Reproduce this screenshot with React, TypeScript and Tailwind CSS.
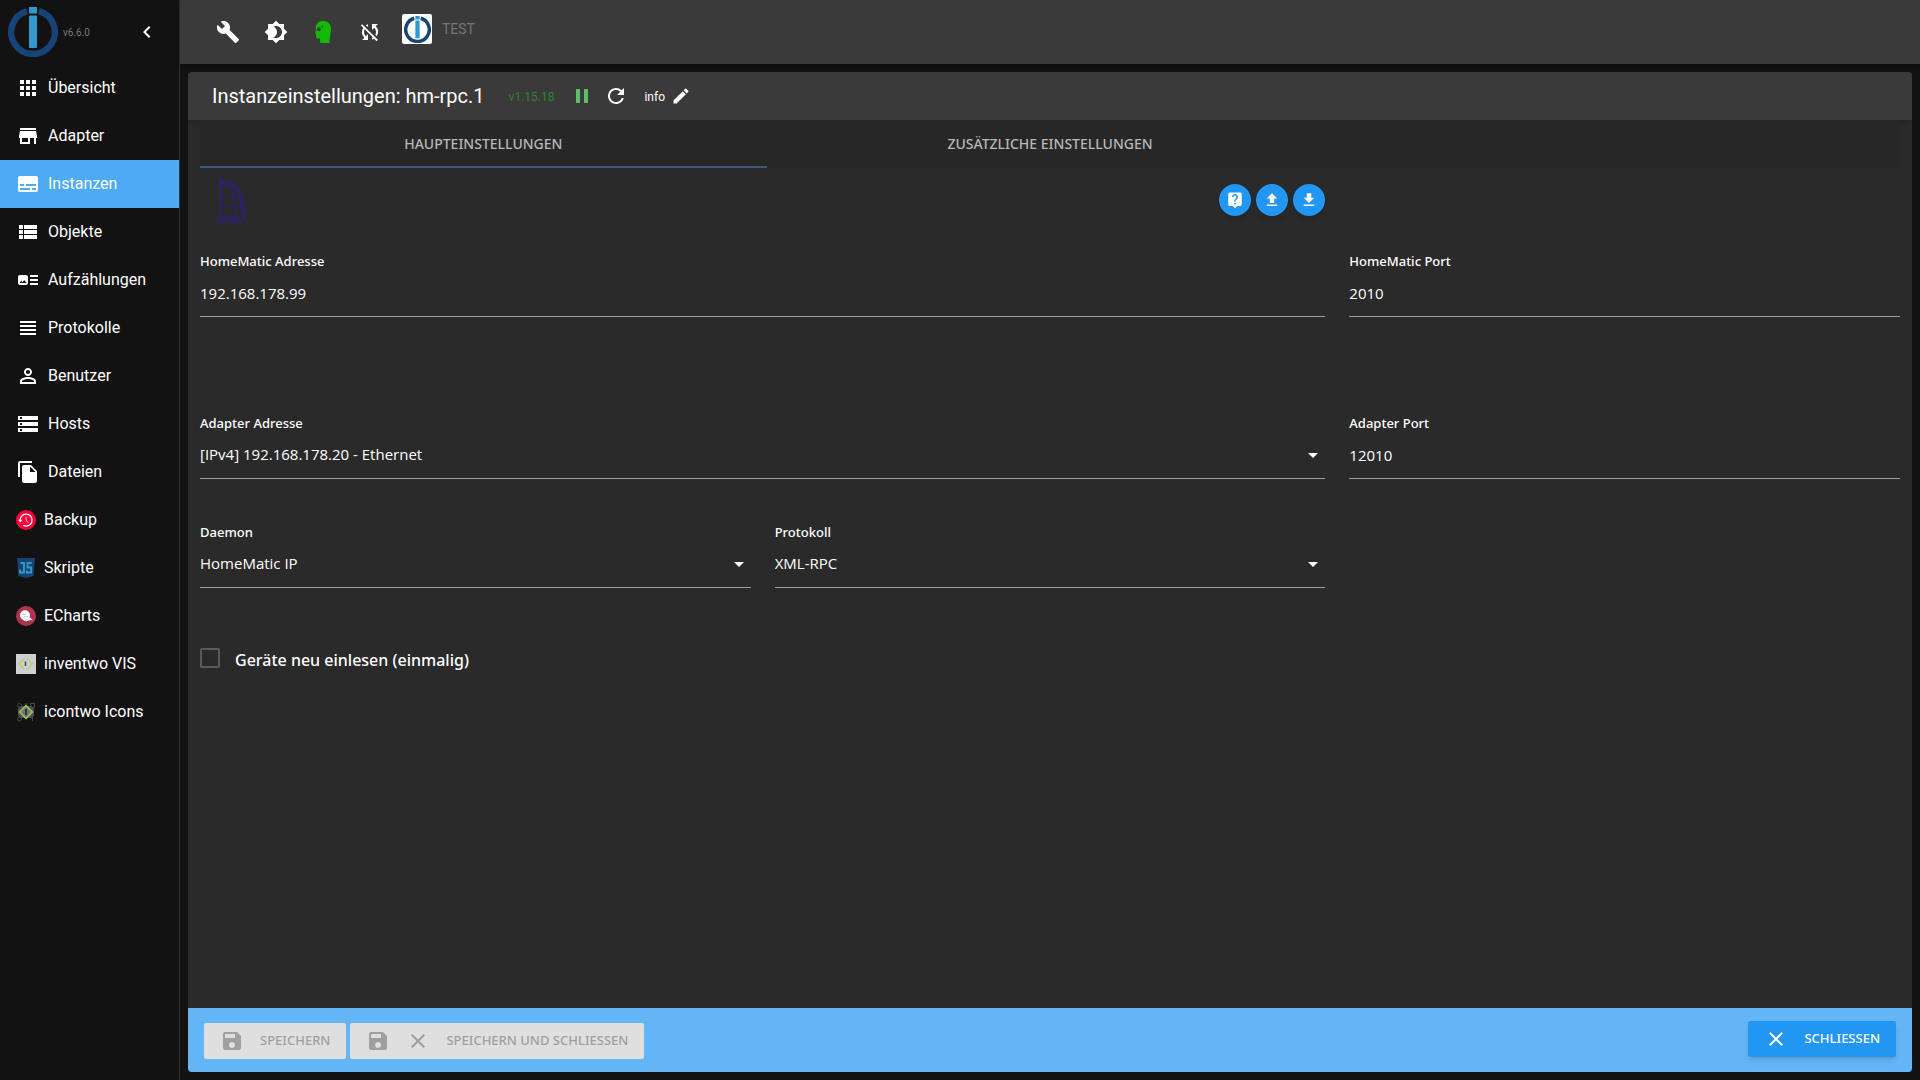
import type { ReactNode } from "react";
import {
  MdApps,
  MdArtTrack,
  MdBrightness4,
  MdBuild,
  MdChevronLeft,
  MdClose,
  MdEdit,
  MdFileCopy,
  MdFileDownload,
  MdFileUpload,
  MdLiveHelp,
  MdPause,
  MdPersonOutline,
  MdRefresh,
  MdSave,
  MdStorage,
  MdStore,
  MdSubtitles,
  MdSyncDisabled,
  MdViewHeadline,
  MdViewList,
} from "react-icons/md";

function BrokerLogo({ className }: { className: string }) {
  return (
    <svg viewBox="0 0 50 50" className={className} aria-hidden="true">
      <path d="M31 4.2 A21.8 21.8 0 1 1 19 4.2" fill="none" stroke="#164477" strokeWidth="6.4" />
      <rect x="21" y="0" width="8" height="6.5" fill="#3399cc" />
      <rect x="21" y="8.5" width="8" height="32.5" rx="0.8" fill="#3399cc" />
    </svg>
  );
}

function HeadIcon() {
  return (
    <svg viewBox="0 0 16 22" className="h-[22px] w-4" aria-hidden="true">
      <path
        fill="#13bb00"
        fillRule="evenodd"
        d="M8 0C3.8 0 1 2.600 .9 6.300L1 9 0 12.200l1.200.6v3.400c0 .8.5 1.200 1.300 1.200h2.600V22H14.500v-4C15.500 14 16 11 16 7.800 16 3 12.800 0 8 0ZM3.800 6.300a2 2 0 1 1 0 4 2 2 0 0 1 0-4Zm3.600-1.900a1 1 0 1 1 0 2 1 1 0 0 1 0-2Z"
      />
    </svg>
  );
}

function BackupIcon() {
  return (
    <svg viewBox="0 0 20 20" className="size-5" aria-hidden="true">
      <circle cx="10" cy="10" r="10" fill="#f5003d" />
      <path d="M4.200 11A6 6 0 1 1 7 15.200" fill="none" stroke="#fff" strokeWidth="1.300" />
      <path d="M2.200 9.800h4.200l-2.100 2.600Z" fill="#fff" />
      <path d="M10 6.500v4l2.600 2" fill="none" stroke="#fbb" strokeWidth="1" />
    </svg>
  );
}

function ScriptIcon() {
  return (
    <svg viewBox="0 0 20 20" className="size-5" aria-hidden="true">
      <path d="M1 0h18l-1.600 18L10 20l-7.400-2Z" fill="#164477" />
      <path
        d="M4.500 5H8v9.500H4v-3M15.800 5H11.500v4.500h3.700v5h-4.400v-2"
        fill="none"
        stroke="#3399cc"
        strokeWidth="1.900"
      />
    </svg>
  );
}

function EChartsIcon() {
  return (
    <svg viewBox="0 0 20 20" className="size-5" aria-hidden="true">
      <circle cx="10" cy="10" r="10" fill="#ab344f" />
      <circle cx="9" cy="9.200" r="5" fill="#fff" />
      <path d="M6 12.500c2.600 2.600 5.500 2.200 7.600-1.500l3.400 3.600-2-.6-2.600.6c-2.700 1.300-5 .3-6.400-2.100Z" fill="#fff" />
      <path d="M6 8.500h4M8 10.800h4" stroke="#d9a5b1" strokeWidth=".7" />
    </svg>
  );
}

function InventwoIcon() {
  return (
    <svg viewBox="0 0 20 20" className="size-5" aria-hidden="true">
      <rect width="20" height="20" fill="#cfcfcf" />
      <path d="M8.500 4.500 3 9.800l5.500 5.700M11.500 15.500 16.500 9.800 11 4" fill="none" stroke="#9bd94b" strokeWidth="1.100" />
      <path d="M9.500 7.500v4.500" stroke="#444" strokeWidth="1.500" />
    </svg>
  );
}

function IcontwoIcon() {
  return (
    <svg viewBox="0 0 20 20" className="size-5" aria-hidden="true">
      <g fill="none" stroke="#444" strokeWidth="1">
        <circle cx="3.500" cy="3.500" r="2" />
        <rect x="14.500" y="1.500" width="4" height="4" />
        <circle cx="3.500" cy="17" r="2" />
        <path d="M16.500 14v5M8 2h4" />
      </g>
      <rect x="2" y="4" width="16" height="12" rx="4" fill="#4f4f4f" />
      <path d="m10 3.500 6.500 6.500-6.500 6.500L3.500 10Z" fill="#777" stroke="#93d14a" strokeWidth="1.400" />
      <path d="M10 7v6" stroke="#222" strokeWidth="1.600" />
    </svg>
  );
}

function HomematicLogo() {
  return (
    <svg viewBox="0 0 36 48" className="h-12 w-9" role="img" aria-label="HomeMatic">
      <g fill="none" stroke="#2c1e80">
        <path d="M6.500 0v43" strokeWidth="1.500" />
        <path d="M5 6.500h12c7 3 13 12 13.500 36" strokeWidth="1.800" />
        <path d="M6 10h12c5 4 10 14 10.500 32" strokeWidth="1" />
        <path d="M16 11c4 7 6 16 6 31" strokeWidth="1.200" />
        <path d="M4 20.500h19M3 31h24" strokeWidth=".7" />
        <path d="M8 41.500h15" strokeWidth="1.600" />
        <path d="M0 43h35" strokeWidth=".8" />
      </g>
      <text x="2.500" y="47.800" fontSize="5.500" fill="#2c1e80" fontFamily="Liberation Sans, sans-serif">
        HomeMatic
      </text>
    </svg>
  );
}

const mainNav: { label: string; icon: ReactNode }[] = [
  { label: "Übersicht", icon: <MdApps /> },
  { label: "Adapter", icon: <MdStore /> },
  { label: "Instanzen", icon: <MdSubtitles /> },
  { label: "Objekte", icon: <MdViewList /> },
  { label: "Aufzählungen", icon: <MdArtTrack /> },
  { label: "Protokolle", icon: <MdViewHeadline /> },
  { label: "Benutzer", icon: <MdPersonOutline /> },
  { label: "Hosts", icon: <MdStorage /> },
  { label: "Dateien", icon: <MdFileCopy /> },
];

const adapterNav: { label: string; icon: ReactNode }[] = [
  { label: "Backup", icon: <BackupIcon /> },
  { label: "Skripte", icon: <ScriptIcon /> },
  { label: "ECharts", icon: <EChartsIcon /> },
  { label: "inventwo VIS", icon: <InventwoIcon /> },
  { label: "icontwo Icons", icon: <IcontwoIcon /> },
];

function Sidebar() {
  return (
    <aside className="flex w-[180px] shrink-0 flex-col border-r border-[#303030] bg-[#121212]">
      <div className="flex h-16 items-center pl-2 pr-5">
        <BrokerLogo className="size-[50px]" />
        <span className="ml-[5px] text-[10px] text-[#777]">v6.6.0</span>
        <button type="button" aria-label="Menü einklappen" className="ml-auto text-2xl">
          <MdChevronLeft />
        </button>
      </div>
      <nav>
        {mainNav.map((item) => (
          <a
            key={item.label}
            href="#"
            className={
              item.label === "Instanzen"
                ? "flex h-12 items-center gap-2 bg-[#4dabf5] pl-4"
                : "flex h-12 items-center gap-2 pl-4"
            }
          >
            <span className="text-2xl">{item.icon}</span>
            {item.label}
          </a>
        ))}
        {adapterNav.map((item) => (
          <a key={item.label} href="#" className="flex h-12 items-center gap-2 pl-4">
            {item.icon}
            {item.label}
          </a>
        ))}
      </nav>
    </aside>
  );
}

function Toolbar() {
  return (
    <header className="flex h-16 shrink-0 items-center bg-[#3a3a3a] pl-6 shadow-md">
      <button type="button" aria-label="Einstellungen" className="grid size-12 place-items-center text-2xl">
        <MdBuild />
      </button>
      <button type="button" aria-label="Farbschema" className="grid size-12 place-items-center text-2xl">
        <MdBrightness4 />
      </button>
      <button type="button" aria-label="Expertenmodus" className="grid h-12 w-[46px] place-items-center">
        <HeadIcon />
      </button>
      <button type="button" aria-label="Synchronisierung" className="grid size-12 place-items-center text-2xl">
        <MdSyncDisabled />
      </button>
      <div className="mb-1.5 ml-2 flex items-center gap-2.5">
        <span className="grid size-[30px] place-items-center rounded-xs bg-white">
          <BrokerLogo className="size-[27px]" />
        </span>
        <span className="text-sm text-[#757575]">TEST</span>
      </div>
    </header>
  );
}

function TitleBar() {
  return (
    <div className="flex h-12 shrink-0 items-center bg-[#3a3a3a] pl-6 shadow-md">
      <h1 className="text-xl">Instanzeinstellungen: hm-rpc.1</h1>
      <span className="ml-6 mt-0.5 text-xs text-[#2c852f]">v1.15.18</span>
      <button type="button" aria-label="Pause" className="ml-4 text-2xl text-[#66bb6a]">
        <MdPause />
      </button>
      <button type="button" aria-label="Neu laden" className="ml-2.5 text-2xl">
        <MdRefresh />
      </button>
      <span className="ml-4 mt-0.5 text-xs">info</span>
      <button type="button" aria-label="Bearbeiten" className="ml-1.5 text-xl">
        <MdEdit />
      </button>
    </div>
  );
}

function TextField({ id, label, value, className }: { id: string; label: string; value: string; className: string }) {
  return (
    <div className={className}>
      <label htmlFor={id} className="block font-['Noto_Sans',sans-serif] text-[13px] leading-5 font-medium">
        {label}
      </label>
      <input
        id={id}
        defaultValue={value}
        className="block h-[46px] w-full border-b border-[#9e9e9e] bg-transparent pb-0.5 text-[15px] outline-none"
      />
    </div>
  );
}

function SelectField({ id, label, value, className }: { id: string; label: string; value: string; className: string }) {
  return (
    <div className={className}>
      <label htmlFor={id} className="block font-['Noto_Sans',sans-serif] text-[13px] leading-5 font-medium">
        {label}
      </label>
      <div className="grid items-center">
        <select
          id={id}
          defaultValue={value}
          className="col-start-1 row-start-1 h-[46px] w-full appearance-none border-b border-[#9e9e9e] bg-transparent pb-0.5 text-[15px] outline-none"
        >
          <option>{value}</option>
        </select>
        <svg
          viewBox="0 0 10 5"
          className="pointer-events-none col-start-1 row-start-1 mr-[7px] mb-0.5 h-[5px] w-2.5 justify-self-end"
          aria-hidden="true"
        >
          <path d="M0 0h10L5 5Z" fill="#fff" />
        </svg>
      </div>
    </div>
  );
}

function RoundButton({ label, children }: { label: string; children: ReactNode }) {
  return (
    <button
      type="button"
      aria-label={label}
      className="grid size-8 place-items-center rounded-full bg-[#2196f3] text-lg shadow-md"
    >
      {children}
    </button>
  );
}

export default function App() {
  return (
    <div className="flex h-screen bg-[#121212] font-['Roboto',sans-serif] text-base text-white">
      <Sidebar />
      <div className="flex min-w-0 flex-1 flex-col">
        <Toolbar />
        <main className="m-2 flex min-h-0 flex-1 flex-col overflow-hidden rounded bg-[#2a2a2a]">
          <TitleBar />
          <div className="min-h-0 flex-1 overflow-auto px-3 font-['Open_Sans',sans-serif]">
            <div
              role="tablist"
              className="grid h-12 grid-cols-3 bg-[#272727] font-['Noto_Sans',sans-serif] text-sm font-medium text-[#b8b8b8]"
            >
              <button type="button" role="tab" aria-selected="true" className="border-b-2 border-[#3c5a7d] pt-0.5">
                HAUPTEINSTELLUNGEN
              </button>
              <button type="button" role="tab" aria-selected="false" className="border-b-2 border-transparent pt-0.5">
                ZUSÄTZLICHE EINSTELLUNGEN
              </button>
            </div>
            <div className="grid grid-cols-3 gap-x-6">
              <div className="col-span-2 flex justify-between pt-2">
                <div className="pl-3.5">
                  <HomematicLogo />
                </div>
                <div className="flex gap-[5px] pt-2">
                  <RoundButton label="Hilfe">
                    <MdLiveHelp />
                  </RoundButton>
                  <RoundButton label="Hochladen">
                    <MdFileUpload />
                  </RoundButton>
                  <RoundButton label="Herunterladen">
                    <MdFileDownload />
                  </RoundButton>
                </div>
              </div>
              <TextField
                id="hm-address"
                label="HomeMatic Adresse"
                value="192.168.178.99"
                className="col-span-2 col-start-1 mt-[27px]"
              />
              <TextField id="hm-port" label="HomeMatic Port" value="2010" className="mt-[27px]" />
              <SelectField
                id="adapter-address"
                label="Adapter Adresse"
                value="[IPv4] 192.168.178.20 - Ethernet"
                className="col-span-2 mt-24"
              />
              <TextField id="adapter-port" label="Adapter Port" value="12010" className="mt-24" />
              <SelectField id="daemon" label="Daemon" value="HomeMatic IP" className="mt-[43px]" />
              <SelectField id="protocol" label="Protokoll" value="XML-RPC" className="mt-[43px]" />
            </div>
            <label className="mt-[60px] flex w-fit items-start gap-[15px] font-['Noto_Sans',sans-serif] text-base leading-6 font-medium">
              <input type="checkbox" className="size-5 appearance-none rounded-xs border-2 border-[#5a5a5a]" />
              Geräte neu einlesen (einmalig)
            </label>
          </div>
          <footer className="flex h-16 shrink-0 items-center gap-1 bg-[#64b5f6] px-4 font-['Noto_Sans',sans-serif] text-[13px] font-medium">
            <button type="button" disabled className="mt-0.5 flex h-9 items-center rounded-xs bg-[#dfdfdf] px-4 text-[#9f9f9f]">
              <MdSave className="mr-4 size-6" />
              SPEICHERN
            </button>
            <button type="button" disabled className="mt-0.5 flex h-9 items-center rounded-xs bg-[#dfdfdf] px-4 text-[#9f9f9f]">
              <MdSave className="mr-4 size-6" />
              <MdClose className="mr-4 size-6" />
              SPEICHERN UND SCHLIESSEN
            </button>
            <button type="button" className="ml-auto mb-0.5 flex h-9 items-center rounded-xs bg-[#2196f3] px-4 shadow-md">
              <MdClose className="mr-4 size-6" />
              SCHLIESSEN
            </button>
          </footer>
        </main>
      </div>
    </div>
  );
}
